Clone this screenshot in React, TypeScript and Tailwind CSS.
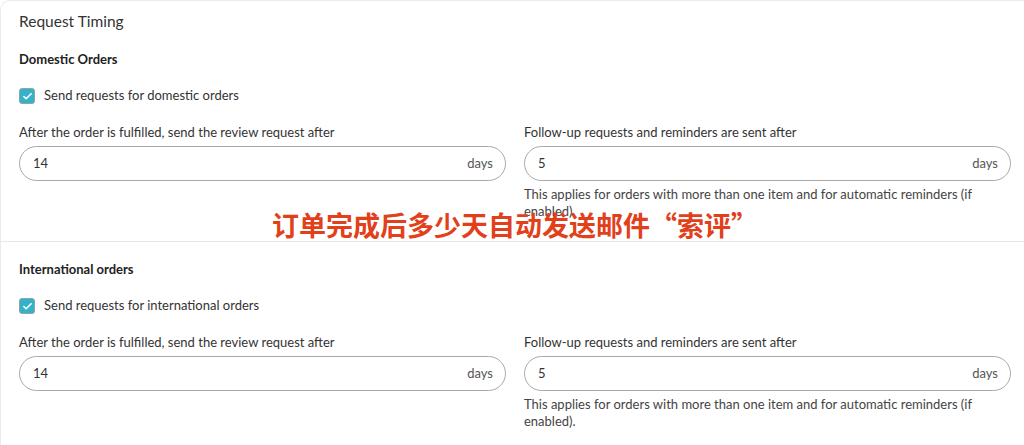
import { Check } from 'lucide-react';

const FONT = "font-['Lato','Noto_Sans',sans-serif]";

function DaysInput({ value }: { value: string }) {
  return (
    <div className="h-[35px] rounded-full border border-[#a9a9a9] bg-white flex items-center justify-between pl-[13px] pr-[12px] text-[13px] text-[#333]">
      <span>{value}</span>
      <span className="text-[#555]">days</span>
    </div>
  );
}

function Section({ title, checkLabel }: { title: string; checkLabel: string }) {
  return (
    <div>
      <h3 className="text-[13px] font-bold text-[#222] leading-[18px]">{title}</h3>
      <label className="mt-[19px] flex items-center gap-[9px] h-[18px]">
        <span className="w-[16px] h-[16px] rounded-[3px] bg-[#35b2c7] border border-[#8fa4a8] flex items-center justify-center">
          <Check className="w-[11px] h-[11px] text-white" strokeWidth={3.5} />
        </span>
        <span className="text-[13px] text-[#333]">{checkLabel}</span>
      </label>
      <div className="mt-[18px] grid grid-cols-2 gap-[18px]">
        <div>
          <div className="text-[13px] text-[#333] leading-[18px]">After the order is fulfilled, send the review request after</div>
          <div className="mt-[5px]">
            <DaysInput value="14" />
          </div>
        </div>
        <div>
          <div className="text-[13px] text-[#333] leading-[18px]">Follow-up requests and reminders are sent after</div>
          <div className="mt-[5px]">
            <DaysInput value="5" />
          </div>
          <p className="mt-[5px] text-[13px] text-[#444] leading-[17px]">
            This applies for orders with more than one item and for automatic reminders (if enabled).
          </p>
        </div>
      </div>
    </div>
  );
}

export default function App() {
  return (
    <div className={`${FONT} bg-white w-[1024px] h-[445px] overflow-hidden relative`}>
      <div className="border-l border-t border-[#e6edf2] rounded-tl-[10px] h-full">
        <div className="pl-[18px] pr-[13px] pt-[10px] pb-[10px] h-[240px]">
          <h2 className="text-[15.5px] text-[#333] leading-[20px]">Request Timing</h2>
          <div className="mt-[19px]">
            <Section title="Domestic Orders" checkLabel="Send requests for domestic orders" />
          </div>
        </div>
        <div className="border-t border-[#e8e8e8] pl-[18px] pr-[13px] pt-[18px]">
          <Section title="International orders" checkLabel="Send requests for international orders" />
        </div>
      </div>
      <div className="absolute left-[272px] top-[207px] text-[27px] leading-[36px] font-bold text-[#e2401b] font-['Noto_Sans_CJK_SC',sans-serif]">
        订单完成后多少天自动发送邮件“索评”
      </div>
    </div>
  );
}
